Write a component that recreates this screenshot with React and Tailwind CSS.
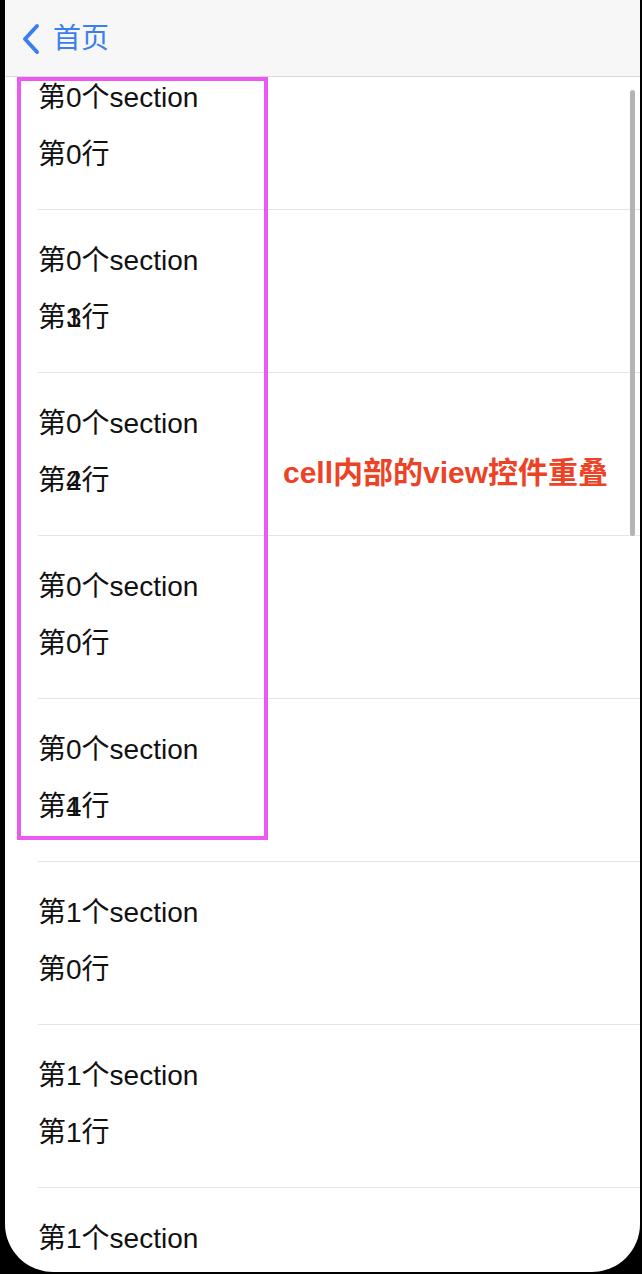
import React from 'react';

const cells = [
  { sec: ['0'], row: ['0'] },
  { sec: ['0'], row: ['3', '1'] },
  { sec: ['0'], row: ['2', '4'] },
  { sec: ['0'], row: ['0'] },
  { sec: ['0'], row: ['4', '1'] },
  { sec: ['1'], row: ['0'] },
  { sec: ['1'], row: ['1'] },
  { sec: ['1'], row: ['2'] },
];

function Label({ before, digits, after }) {
  // 复用的cell里旧label没移除，数字叠在一起
  return (
    <div className="flex items-baseline leading-none whitespace-nowrap">
      <span>{before}</span>
      <span className="grid">
        {digits.map((d, i) => (
          <span key={i} className="col-start-1 row-start-1">
            {d}
          </span>
        ))}
      </span>
      <span>{after}</span>
    </div>
  );
}

function Cell({ cell }) {
  return (
    <div className="h-[163px] pl-[33px] flex flex-col">
      <div className="h-[162px] flex flex-col pt-[37px] gap-[29px] text-[28px] text-[#111]">
        <Label before="第" digits={cell.sec} after="个section" />
        <Label before="第" digits={cell.row} after="行" />
      </div>
      <div className="h-px bg-[#e4e4e4]" />
    </div>
  );
}

export default function App() {
  return (
    <div
      className="w-[642px] h-[1274px] bg-black pl-[5px] pr-[2px] pb-[2px]"
      style={{ fontFamily: '"Liberation Sans", "Noto Sans CJK SC", sans-serif' }}
    >
      <div className="relative w-full h-full bg-white rounded-b-[48px] overflow-hidden flex flex-col">
        {/* 导航栏 */}
        <div className="h-[77px] shrink-0 bg-[#f7f7f7] border-b border-[#dadada] flex items-center pl-[14px] pt-[2px]">
          <svg width="24" height="32" viewBox="0 0 24 32" className="mr-[10px]">
            <path d="M18 3 L6 16 L18 29" fill="none" stroke="#3a7ff0" strokeWidth="4" strokeLinecap="round" strokeLinejoin="round" />
          </svg>
          <span className="text-[28px] text-[#3a7ff0] leading-none">首页</span>
        </div>

        {/* 列表 */}
        <div className="relative flex-1 overflow-hidden">
          <div className="-mt-[30px]">
            {cells.map((c, i) => (
              <Cell key={i} cell={c} />
            ))}
          </div>

          {/* 标注框 */}
          <div className="absolute left-[12px] top-0 w-[251px] h-[763px] border-[4px] border-[#ec58f2]" />
          <div className="absolute left-[278px] top-[381px] text-[30px] font-bold text-[#ec4326] leading-none whitespace-nowrap">
            cell内部的view控件重叠
          </div>

          {/* 滚动条 */}
          <div className="absolute right-[5px] top-[13px] w-[5px] h-[446px] rounded-full bg-[#b4b4b4]" />
        </div>
      </div>
    </div>
  );
}
